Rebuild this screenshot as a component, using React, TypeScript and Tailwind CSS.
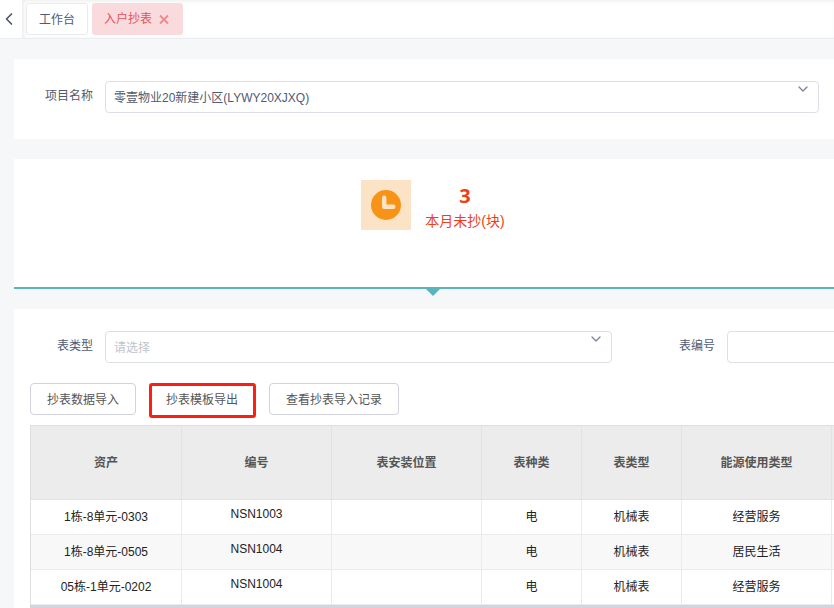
import { ChevronDown, ChevronLeft } from "lucide-react";
import type { ReactNode } from "react";

const columns = [
  { title: "资产", width: "w-[151px]" },
  { title: "编号", width: "w-[150px]" },
  { title: "表安装位置", width: "w-[150px]" },
  { title: "表种类", width: "w-[100px]" },
  { title: "表类型", width: "w-[100px]" },
  { title: "能源使用类型", width: "w-[150px]" },
];

const rows = [
  { asset: "1栋-8单元-0303", code: "NSN1003", place: "", kind: "电", type: "机械表", usage: "经营服务" },
  { asset: "1栋-8单元-0505", code: "NSN1004", place: "", kind: "电", type: "机械表", usage: "居民生活" },
  { asset: "05栋-1单元-0202", code: "NSN1004", place: "", kind: "电", type: "机械表", usage: "经营服务" },
];

const fieldClass = "block h-8 w-full rounded border border-[#dcdfe6] bg-white px-2 pt-px outline-none";
const buttonClass = "h-8 rounded border border-[#d0d3de] bg-white px-4 pt-px text-[#555]";

const SelectField = ({ id, className, children }: { id: string; className: string; children: ReactNode }) => (
  <div className="relative">
    <select id={id} className={`${fieldClass} appearance-none ${className}`}>
      {children}
    </select>
    <ChevronDown className="pointer-events-none absolute right-2 top-0 size-4 text-[#7d8699]" strokeWidth={2} />
  </div>
);

const TabBar = () => (
  <header className="flex h-[39px] border-b border-[#ebedf0] bg-white">
    <button aria-label="向左" className="flex w-[22px] items-center justify-center pr-[5px] text-[#4c566c]">
      <ChevronLeft className="size-5 shrink-0" strokeWidth={2} />
    </button>
    <nav className="flex flex-1 items-start gap-1 pl-1 pt-[3px] shadow-[inset_2px_1px_4px_rgba(0,0,0,0.08)]">
      <a href="#desk" className="flex h-8 items-center rounded-[3px] border border-[#e8eaec] bg-white px-3 pt-px text-[#515a6e]">
        工作台
      </a>
      <a href="#meter" className="flex h-8 items-center gap-1 rounded-[3px] bg-[#fadbdd] pl-3 pr-[11px] text-[#e25459]">
        入户抄表
        <svg viewBox="0 0 16 16" className="size-4 text-[#e88b90]">
          <path d="M4 4.5L12 12.5M12 4.5L4 12.5" fill="none" stroke="currentColor" strokeWidth="1.8" />
        </svg>
      </a>
    </nav>
  </header>
);

const ProjectPanel = () => (
  <section className="flex h-20 items-start bg-white pl-[31px] pr-[33px] pt-[22px]">
    <label htmlFor="project" className="w-[60px] leading-[30px] text-[#515a6e]">
      项目名称
    </label>
    <div className="flex-1">
      <SelectField id="project" className="text-[#515a6e]">
        <option>零壹物业20新建小区(LYWY20XJXQ)</option>
      </SelectField>
    </div>
  </section>
);

const SummaryPanel = () => (
  <section className="relative mt-5 flex h-[130px] items-start justify-center gap-[14px] border-b-2 border-[#57b5bb] bg-white pt-[21px]">
    <div className="flex size-[50px] items-center justify-center bg-[#fde3c6]">
      <svg viewBox="0 0 30 30" className="size-[30px]">
        <circle cx="15" cy="15" r="15" fill="#f79317" />
        <path d="M13.2 7.8V16.8H22.3" fill="none" stroke="#fde3c6" strokeWidth="4.4" strokeLinecap="round" strokeLinejoin="round" />
      </svg>
    </div>
    <div className="pt-1 text-center text-[#ed4014]">
      <p className="font-['Open_Sans','Noto_Sans_CJK_SC',sans-serif] text-xl font-bold leading-6">3</p>
      <p className="text-sm leading-[26px]">本月未抄(块)</p>
    </div>
    <svg viewBox="0 0 14 7" className="absolute left-1/2 top-full mt-0.5 h-[7px] w-[14px] -translate-x-1/2">
      <path d="M0 0H14L7 7Z" fill="#57b5bb" />
    </svg>
  </section>
);

const MeterTable = () => (
  <div className="mt-[7px] overflow-hidden">
    <table className="w-[852px] table-fixed border-separate border-spacing-0 border-l border-t border-[#dcdee2] text-center">
      <thead>
        <tr className="h-[74px] bg-[#ececec] text-[#555]">
          {columns.map((col) => (
            <th key={col.title} className={`${col.width} border-b border-r border-[#e2e2e4] p-0 font-bold`}>
              {col.title}
            </th>
          ))}
          <th className="border-b border-[#e2e2e4]" />
        </tr>
      </thead>
      <tbody className="text-[#222]">
        {rows.map((row) => (
          <tr key={row.asset} className="h-[35px] even:bg-[#f8f8f8] *:border-b *:border-[#e8eaec] *:p-0">
            <td className="border-r">{row.asset}</td>
            <td className="border-r align-top leading-7">{row.code}</td>
            <td className="border-r">{row.place}</td>
            <td className="border-r">{row.kind}</td>
            <td className="border-r">{row.type}</td>
            <td className="border-r">{row.usage}</td>
            <td />
          </tr>
        ))}
      </tbody>
    </table>
    <div className="h-4 bg-[#d3d5de]" />
  </div>
);

const RecordsPanel = () => (
  <section className="mt-5 bg-white pl-4 pt-[22px]">
    <div className="flex items-start">
      <label htmlFor="meter-type" className="w-[75px] pr-3 text-right leading-[30px] text-[#515a6e]">
        表类型
      </label>
      <div className="w-[507px]">
        <SelectField id="meter-type" className="text-[#c0c4cc]">
          <option>请选择</option>
        </SelectField>
      </div>
      <label htmlFor="meter-code" className="w-[115px] pr-3 text-right leading-[30px] text-[#515a6e]">
        表编号
      </label>
      <div className="flex-1">
        <input id="meter-code" type="text" className={`${fieldClass} rounded-r-none text-[#515a6e]`} />
      </div>
    </div>
    <div className="mt-5 flex items-start gap-[13px]">
      <button className={buttonClass}>抄表数据导入</button>
      <button className="h-[35px] rounded-[3px] border-[3px] border-[#ff1f12] bg-white pb-px pl-[14px] pr-[15px] text-[#555]">
        抄表模板导出
      </button>
      <button className={buttonClass}>查看抄表导入记录</button>
    </div>
    <MeterTable />
  </section>
);

const App = () => {
  return (
    <div className="h-screen overflow-hidden bg-[#f5f7f9] font-['Liberation_Sans','Noto_Sans_CJK_SC',sans-serif] text-xs">
      <TabBar />
      {/* content runs a little past the right edge of the viewport */}
      <main className="-mr-[18px] pl-[14px] pt-5">
        <ProjectPanel />
        <SummaryPanel />
        <RecordsPanel />
      </main>
    </div>
  );
};

export default App;
